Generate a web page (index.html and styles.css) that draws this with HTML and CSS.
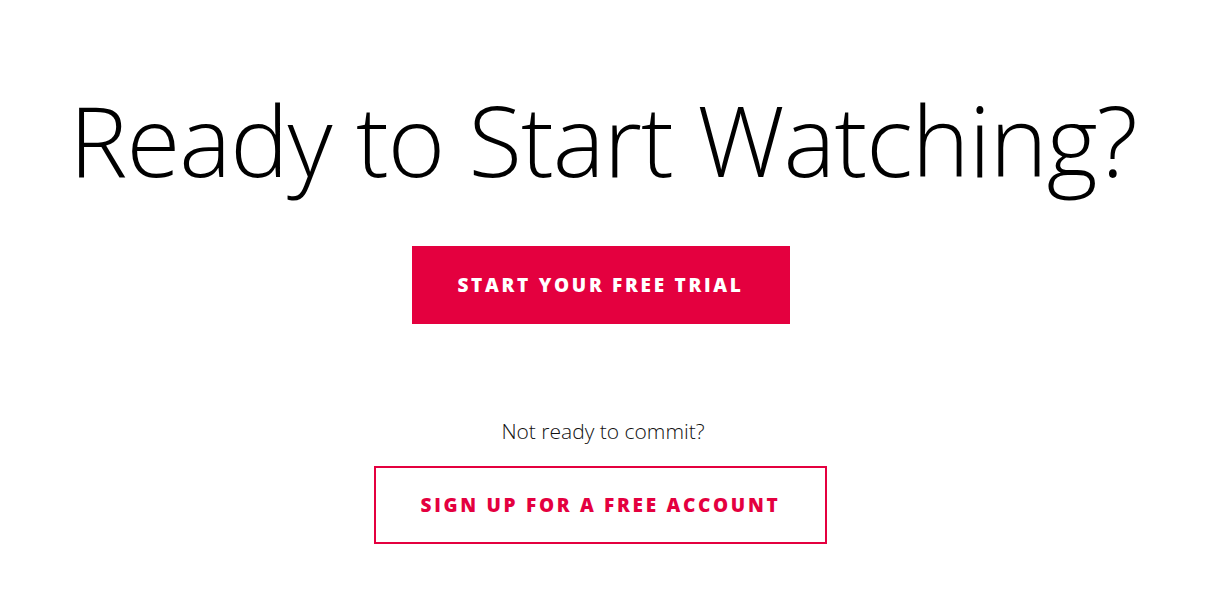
FILE: index.html
```html
<!DOCTYPE html>
<html lang="en">
<head>
<meta charset="utf-8">
<link rel="stylesheet" href="styles.css">
</head>
<body>
<main class="cta">
  <h1 class="cta-title">Ready to Start Watching?</h1>
  <a class="btn btn-solid" href="#">Start Your Free Trial</a>
  <p class="cta-note">Not ready to commit?</p>
  <a class="btn btn-outline" href="#">Sign Up for a Free Account</a>
</main>
</body>
</html>
```
FILE: styles.css
```css
html, body {
  margin: 0;
  padding: 0;
  background: #fff;
}
body {
  font-family: "Open Sans", "Liberation Sans", sans-serif;
  color: #000;
}
.cta {
  display: flex;
  flex-direction: column;
  align-items: center;
  padding-top: 74px;
}
.cta-title {
  margin: 0;
  font-weight: 300;
  font-size: 98px;
  line-height: 130px;
  letter-spacing: -1px;
}
.btn {
  display: flex;
  align-items: center;
  justify-content: center;
  box-sizing: border-box;
  height: 78px;
  margin-right: 5px;
  text-decoration: none;
  text-transform: uppercase;
  font-weight: 800;
  font-size: 19px;
  letter-spacing: 2.7px;
}
.btn-solid {
  margin-top: 42px;
  width: 378px;
  background: #e4003f;
  color: #fff;
}
.cta-note {
  margin: 93px 0 0;
  font-weight: 300;
  font-size: 21px;
  line-height: 28px;
  color: #111;
}
.btn-outline {
  margin-top: 21px;
  width: 453px;
  border: 2px solid #e4003f;
  color: #e4003f;
}
```
